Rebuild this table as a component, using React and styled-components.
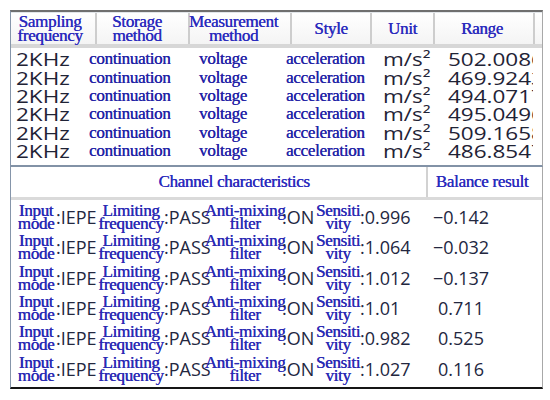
import React from 'react'
import styled, { createGlobalStyle } from 'styled-components'

const GlobalStyle = createGlobalStyle`
  html, body {
    margin: 0;
    padding: 0;
    background: #fff;
  }
  body {
    font-family: "Liberation Serif", "Times New Roman", serif;
  }
`

const Frame = styled.div`
  width: 533px;
  margin: 10px 0 0 10px;
`

const TopPanel = styled.section`
  border-top: 2px solid #6f6f6f;
  border-left: 1px solid #8595aa;
  border-right: 1px solid #a8a8a8;
  border-bottom: 2px solid #8292a6;
  background: #fff;
`

const HeaderRow = styled.div`
  display: flex;
  height: 31px;
  border-top: 1px solid #e2e6ea;
  border-bottom: 4px solid #d7d7d7;
  background: linear-gradient(#ffffff, #f4f4f4);
`

const HeadCell = styled.div`
  width: ${p => p.$w}px;
  flex: none;
  box-sizing: border-box;
  display: flex;
  flex-direction: column;
  align-items: center;
  justify-content: center;
  padding-right: ${p => p.$pr || 0}px;
  border-right: ${p => (p.$last ? 'none' : '2px solid #cdcdcd')};
  color: #2b2bbd;
  font-size: 17px;
  letter-spacing: -0.3px;
  line-height: 14px;
  text-shadow: 0.35px 0 0 currentColor;
  white-space: nowrap;
`

const DataBody = styled.div`
  padding: 2px 0 5px 5px;
`

const DataRow = styled.div`
  display: flex;
  align-items: center;
  height: 18.4px;
`

const TextCell = styled.div`
  width: ${p => p.$w}px;
  flex: none;
  color: #2424a6;
  font-size: 17px;
  letter-spacing: -0.3px;
  line-height: 18px;
  text-shadow: 0.35px 0 0 currentColor;
  white-space: nowrap;
`

const WideCell = styled.div`
  width: ${p => p.$w}px;
  flex: none;
  overflow: ${p => (p.$clip ? 'hidden' : 'visible')};
  white-space: nowrap;
  color: #1f2336;
  font-family: "Open Sans", "Liberation Sans", sans-serif;
  font-size: 18px;
  line-height: 24px;
`

const Wide = styled.span`
  display: inline-block;
  transform: scaleX(1.25);
  transform-origin: left center;
`

const BottomPanel = styled.section`
  border-left: 1px solid #8595aa;
  border-right: 1px solid #a8a8a8;
  border-bottom: 2px solid #151515;
  background: #fff;
`

const ChannelHeader = styled.div`
  display: flex;
  height: 29.6px;
  border-bottom: 3px solid #dadada;
`

const GroupHead = styled.div`
  box-sizing: border-box;
  display: flex;
  align-items: center;
  justify-content: center;
  color: #2b2bbd;
  font-size: 17px;
  letter-spacing: -0.3px;
  text-shadow: 0.35px 0 0 currentColor;
  white-space: nowrap;
  ${p => (p.$wide
    ? 'width: 417px; padding-left: 31px; border-right: 2px solid #d2d2d2;'
    : 'flex: 1; padding-right: 6px;')}
`

const ChannelBody = styled.div`
  padding: 2px 0 3px 5px;
`

const ChannelRow = styled.div`
  display: flex;
  align-items: center;
  height: 30.3px;
`

const Label = styled.div`
  width: ${p => p.$w}px;
  flex: none;
  display: flex;
  flex-direction: column;
  align-items: center;
  color: #2a2ab4;
  font-size: 17px;
  letter-spacing: -0.3px;
  line-height: 13px;
  text-shadow: 0.35px 0 0 currentColor;
  white-space: nowrap;
`

const Value = styled.div`
  width: ${p => p.$w}px;
  flex: none;
  text-align: ${p => (p.$center ? 'center' : 'left')};
  color: #23273f;
  font-family: "Open Sans", "Liberation Sans", sans-serif;
  font-size: 18px;
  line-height: 20px;
  white-space: nowrap;
`

const headers = [
  { w: 86, pr: 6, lines: ['Sampling', 'frequency'] },
  { w: 93, pr: 11, lines: ['Storage', 'method'] },
  { w: 102, pr: 13, lines: ['Measurement', 'method'] },
  { w: 80, lines: ['Style'] },
  { w: 63, lines: ['Unit'] },
  { w: 100, pr: 4, lines: ['Range'] },
  { w: 7, lines: [], last: true },
]

const ranges = ['502.0086', '469.9243', '494.0717', '495.0496', '509.1658', '486.8547']

const channels = [
  { sens: '0.996', balance: '\u22120.142' },
  { sens: '1.064', balance: '\u22120.032' },
  { sens: '1.012', balance: '\u22120.137' },
  { sens: '1.01', balance: '0.711' },
  { sens: '0.982', balance: '0.525' },
  { sens: '1.027', balance: '0.116' },
]

function TwoLines({ w, a, b }) {
  return (
    <Label $w={w}>
      <span>{a}</span>
      <span>{b}</span>
    </Label>
  )
}

export default function App() {
  return (
    <>
      <GlobalStyle />
      <Frame>
        <TopPanel>
          <HeaderRow>
            {headers.map((h, i) => (
              <HeadCell key={i} $w={h.w} $pr={h.pr} $last={h.last}>
                {h.lines.map(l => <span key={l}>{l}</span>)}
              </HeadCell>
            ))}
          </HeaderRow>
          <DataBody>
            {ranges.map(r => (
              <DataRow key={r}>
                <WideCell $w={73}><Wide>2KHz</Wide></WideCell>
                <TextCell $w={110}>continuation</TextCell>
                <TextCell $w={87}>voltage</TextCell>
                <TextCell $w={97}>acceleration</TextCell>
                <WideCell $w={65}><Wide>m/s²</Wide></WideCell>
                <WideCell $w={85} $clip><Wide>{r}</Wide></WideCell>
              </DataRow>
            ))}
          </DataBody>
        </TopPanel>
        <BottomPanel>
          <ChannelHeader>
            <GroupHead $wide>Channel characteristics</GroupHead>
            <GroupHead>Balance result</GroupHead>
          </ChannelHeader>
          <ChannelBody>
            {channels.map((c, i) => (
              <ChannelRow key={i}>
                <TwoLines w={40} a="Input" b="mode" />
                <Value $w={42}>:IEPE</Value>
                <TwoLines w={66} a="Limiting" b="frequency" />
                <Value $w={44}>:PASS</Value>
                <TwoLines w={74} a="Anti-mixing" b="filter" />
                <Value $w={34}>:ON</Value>
                <TwoLines w={44} a="Sensiti" b="vity" />
                <Value $w={68}>:{c.sens}</Value>
                <Value $w={66} $center>{c.balance}</Value>
              </ChannelRow>
            ))}
          </ChannelBody>
        </BottomPanel>
      </Frame>
    </>
  )
}
